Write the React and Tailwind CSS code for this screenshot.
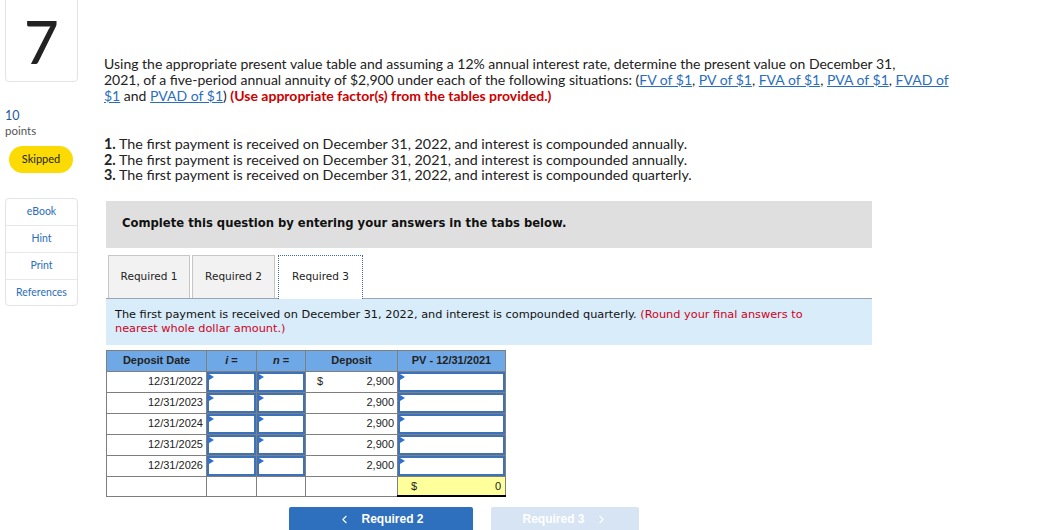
import React from "react";
import { ChevronLeft, ChevronRight } from "lucide-react";

const Flag = () => (
  <span className="absolute left-0 top-0 w-0 h-0 border-t-[3px] border-b-[3px] border-l-[5px] border-t-transparent border-b-transparent border-l-[#2f6fd0]" />
);

const InputCell = () => (
  <td className="p-0 border border-[#7f7f7f]">
    <div className="relative h-[20px] border-2 border-[#3d72b8] bg-white">
      <Flag />
    </div>
  </td>
);

const rows = ["12/31/2022", "12/31/2023", "12/31/2024", "12/31/2025", "12/31/2026"];

export default function App() {
  const link = "text-[#2a6ebb] underline";
  return (
    <div className="w-[1046px] h-[530px] overflow-hidden bg-white flex" style={{ fontFamily: "Lato, 'Noto Sans', sans-serif" }}>
      {/* Sidebar */}
      <div className="w-[104px] shrink-0 pl-[5px] flex flex-col">
        <div className="w-[73px] h-[86px] -mt-[4px] border border-[#e3e3e3] rounded-[4px] flex items-center justify-center text-[60px] leading-none text-[#222] font-medium pt-[4px]">
          7
        </div>
        <div className="mt-[26px] text-[12.5px] leading-[15px] text-[#1d5a9c]">10</div>
        <div className="text-[11.5px] leading-[15px] text-[#555]">points</div>
        <div className="mt-[8px] ml-[4px] w-[64px] h-[27px] rounded-full bg-[#fcdb05] flex items-center justify-center text-[11px] text-[#222]">
          Skipped
        </div>
        <div className="mt-[25px] w-[73px] border border-[#e3e3e3] rounded-[4px] flex flex-col text-[10.5px] text-[#2a6ebb]">
          <div className="h-[27px] flex items-center justify-center border-b border-[#e8e8e8]">eBook</div>
          <div className="h-[27px] flex items-center justify-center border-b border-[#e8e8e8]">Hint</div>
          <div className="h-[27px] flex items-center justify-center border-b border-[#e8e8e8]">Print</div>
          <div className="h-[25px] flex items-center justify-center">References</div>
        </div>
      </div>

      {/* Main */}
      <div className="flex-1 pt-[56px]">
        <p className="text-[14px] leading-[16px] text-[#222] whitespace-nowrap">
          Using the appropriate present value table and assuming a 12% annual interest rate, determine the present value on December 31,
          <br />
          2021, of a five-period annual annuity of $2,900 under each of the following situations: (
          <span className={link}>FV of $1</span>, <span className={link}>PV of $1</span>, <span className={link}>FVA of $1</span>,{" "}
          <span className={link}>PVA of $1</span>, <span className={link}>FVAD of</span>
          <br />
          <span className={link}>$1</span> and <span className={link}>PVAD of $1</span>){" "}
          <span className="font-bold text-[#c00]">(Use appropriate factor(s) from the tables provided.)</span>
        </p>

        <div className="mt-[32px] text-[14.3px] leading-[15.5px] text-[#222]">
          <div><b>1.</b> The first payment is received on December 31, 2022, and interest is compounded annually.</div>
          <div><b>2.</b> The first payment is received on December 31, 2021, and interest is compounded annually.</div>
          <div><b>3.</b> The first payment is received on December 31, 2022, and interest is compounded quarterly.</div>
        </div>

        <div className="ml-[2px] w-[766px]" style={{ fontFamily: "'DejaVu Sans', Verdana, sans-serif" }}>
          <div className="mt-[18px] h-[47px] bg-[#dfdfdf] flex items-center pl-[16px] text-[11.6px] font-bold text-[#111]">
            Complete this question by entering your answers in the tabs below.
          </div>

          <div className="mt-[7px] flex items-end border-b border-[#9aa5b4] h-[44px]">
            <div className="ml-[2px] w-[82px] h-[43px] bg-[#f2f2f2] border border-[#c6c6c6] border-b-0 flex items-center justify-center text-[10.5px] text-[#222]">Required 1</div>
            <div className="ml-[2px] w-[83px] h-[43px] bg-[#f2f2f2] border border-[#c6c6c6] border-b-0 flex items-center justify-center text-[10.5px] text-[#222]">Required 2</div>
            <div className="ml-[3px] w-[85px] h-[44px] -mb-px bg-white border border-dotted border-[#3a67b0] border-b-0 flex items-center justify-center text-[10.5px] text-[#222]">Required 3</div>
          </div>

          <div className="h-[46px] bg-[#d8ecf9] pl-[9px] pr-[36px] pt-[9px] text-[11.3px] leading-[14px] text-[#111]">
            The first payment is received on December 31, 2022, and interest is compounded quarterly.{" "}
            <span className="text-[#d0021b]">(Round your final answers to nearest whole dollar amount.)</span>
          </div>

          <table className="mt-[5px] border-collapse text-[11px] text-[#222]" style={{ fontFamily: "'Liberation Sans', Arial, sans-serif" }}>
            <colgroup>
              <col className="w-[100px]" />
              <col className="w-[50px]" />
              <col className="w-[49px]" />
              <col className="w-[92px]" />
              <col className="w-[108px]" />
            </colgroup>
            <thead>
              <tr className="h-[21px] bg-[#6fa8e6] font-bold">
                <th className="border border-[#7f7f7f] font-bold">Deposit Date</th>
                <th className="border border-[#7f7f7f] font-bold italic">i <span className="not-italic">=</span></th>
                <th className="border border-[#7f7f7f] font-bold italic">n <span className="not-italic">=</span></th>
                <th className="border border-[#7f7f7f] font-bold">Deposit</th>
                <th className="border border-[#7f7f7f] font-bold">PV - 12/31/2021</th>
              </tr>
            </thead>
            <tbody>
              {rows.map((d, idx) => (
                <tr key={d} className="h-[20px]">
                  <td className="border border-[#7f7f7f] text-right pr-[3px] py-0">{d}</td>
                  <InputCell />
                  <InputCell />
                  <td className="border border-[#7f7f7f] pr-[3px] py-0">
                    <div className="flex justify-between pl-[11px]">
                      <span>{idx === 0 ? "$" : ""}</span>
                      <span>2,900</span>
                    </div>
                  </td>
                  <InputCell />
                </tr>
              ))}
              <tr className="h-[20px]">
                <td className="border border-[#7f7f7f]" />
                <td className="border border-[#7f7f7f]" />
                <td className="border border-[#7f7f7f]" />
                <td className="border border-[#7f7f7f]" />
                <td className="border border-[#7f7f7f] border-b-2 border-b-black bg-[#ffff9c] px-[4px]">
                  <div className="flex justify-between pl-[9px]">
                    <span>$</span>
                    <span>0</span>
                  </div>
                </td>
              </tr>
            </tbody>
          </table>

          <div className="mt-[10px] flex" style={{ fontFamily: "'Liberation Sans', Arial, sans-serif" }}>
            <div className="ml-[183px] w-[184px] h-[30px] pb-[6px] rounded-t-[2px] bg-[#2e6fbe] text-white font-bold text-[12px] flex items-center justify-center gap-[10px]">
              <ChevronLeft size={13} strokeWidth={2} />
              <span>Required 2</span>
            </div>
            <div className="ml-[18px] w-[148px] h-[30px] pb-[6px] rounded-t-[2px] bg-[#d6e4f4] text-white font-bold text-[12px] flex items-center justify-center gap-[10px]">
              <span>Required 3</span>
              <ChevronRight size={13} strokeWidth={2} />
            </div>
          </div>
        </div>
      </div>
    </div>
  );
}
